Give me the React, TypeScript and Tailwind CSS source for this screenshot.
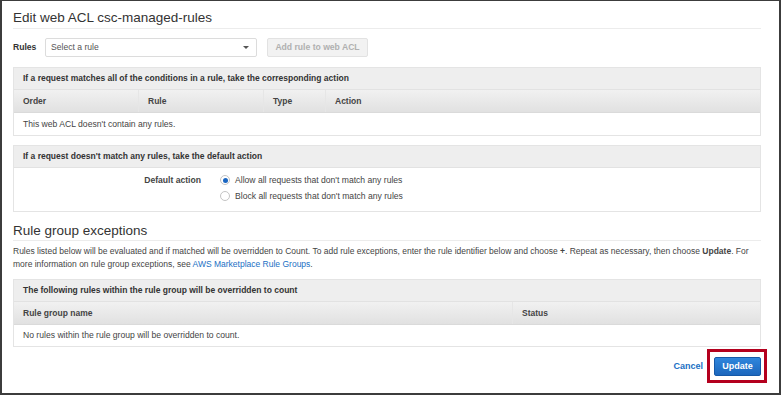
import React from "react";

const font = { fontFamily: '"Liberation Sans", Arial, sans-serif' };

type Col = { label: string; width?: string };

const PanelHeader: React.FC<{ title: string }> = ({ title }) => (
  <div className="h-[22px] flex items-center px-[9px] bg-[#eeeeee] border-b border-[#e2e2e2] text-[8.5px] font-bold text-[#333]">
    {title}
  </div>
);

const ColumnHeader: React.FC<{ cols: Col[] }> = ({ cols }) => (
  <div className="h-[23px] flex bg-gradient-to-b from-[#f1f1f1] to-[#e1e1e1] border-b border-[#dadada] text-[8.5px] font-bold text-[#444]">
    {cols.map((c, i) => (
      <div
        key={c.label}
        className={`${c.width ?? "flex-1"} flex items-center px-[9px] ${i > 0 ? "border-l border-[#e6e6e6]" : ""}`}
      >
        {c.label}
      </div>
    ))}
  </div>
);

const Radio: React.FC<{ checked?: boolean; label: string }> = ({ checked, label }) => (
  <div className="flex items-center h-[16px] gap-[5px]">
    <span className="w-[10px] h-[10px] rounded-full border border-[#c4c4c4] bg-white flex items-center justify-center">
      {checked && <span className="w-[5px] h-[5px] rounded-full bg-[#1a66c2]" />}
    </span>
    <span className="text-[8.6px] text-[#444]">{label}</span>
  </div>
);

export default function App() {
  return (
    <div style={font} className="w-[781px] h-[395px] border-2 border-t border-[#3c3c3c] bg-white pl-[11px] pr-[18px] flex flex-col">
      <div className="mt-[9px] h-[19px] leading-[16px] text-[13.5px] text-[#333] border-b border-[#ececec]">
        Edit web ACL csc-managed-rules
      </div>

      <div className="mt-[9px] h-[19px] flex items-center">
        <span className="w-[32px] text-[8.6px] font-bold text-[#333]">Rules</span>
        <div className="w-[212px] h-[19px] border border-[#dcdcdc] rounded-[2px] flex items-center justify-between px-[5px]">
          <span className="text-[8.6px] text-[#555]">Select a rule</span>
          <span className="w-0 h-0 border-l-[3px] border-r-[3px] border-t-[3px] border-l-transparent border-r-transparent border-t-[#555] mr-[2px]" />
        </div>
        <div className="ml-[10px] w-[101px] h-[19px] rounded-[2px] border border-[#e2e2e2] bg-[#f2f2f2] flex items-center justify-center text-[8.6px] font-bold text-[#b0b0b0]">
          Add rule to web ACL
        </div>
      </div>

      <div className="mt-[10px] border border-[#e4e4e4]">
        <PanelHeader title="If a request matches all of the conditions in a rule, take the corresponding action" />
        <ColumnHeader
          cols={[
            { label: "Order", width: "w-[124px]" },
            { label: "Rule", width: "w-[125px]" },
            { label: "Type", width: "w-[62px]" },
            { label: "Action" },
          ]}
        />
        <div className="h-[22px] flex items-center px-[9px] text-[8.6px] text-[#444]">
          This web ACL doesn't contain any rules.
        </div>
      </div>

      <div className="mt-[9px] border border-[#e4e4e4]">
        <PanelHeader title="If a request doesn't match any rules, take the default action" />
        <div className="h-[43px] flex pt-[4px]">
          <div className="w-[187px] h-[16px] flex items-center justify-end text-[8.6px] font-bold text-[#444]">
            Default action
          </div>
          <div className="ml-[19px] flex flex-col">
            <Radio checked label="Allow all requests that don't match any rules" />
            <Radio label="Block all requests that don't match any rules" />
          </div>
        </div>
      </div>

      <div className="mt-[11px] h-[18px] leading-[16px] text-[13.5px] text-[#333] border-b border-[#ececec]">
        Rule group exceptions
      </div>

      <div className="mt-[4px] text-[8.5px] leading-[13px] text-[#444] flex flex-col">
        <div className="h-[13px] whitespace-nowrap">
          Rules listed below will be evaluated and if matched will be overridden to Count. To add rule exceptions, enter the
          rule identifier below and choose <b>+</b>. Repeat as necessary, then choose <b>Update</b>. For
        </div>
        <div className="h-[13px] whitespace-nowrap">
          more information on rule group exceptions, see <span className="text-[#1a6fc4]">AWS Marketplace Rule Groups</span>.
        </div>
      </div>

      <div className="mt-[8px] border border-[#e4e4e4]">
        <PanelHeader title="The following rules within the rule group will be overridden to count" />
        <ColumnHeader
          cols={[
            { label: "Rule group name", width: "w-[498px]" },
            { label: "Status" },
          ]}
        />
        <div className="h-[21px] flex items-center px-[9px] text-[8.6px] text-[#444]">
          No rules within the rule group will be overridden to count.
        </div>
      </div>

      <div className="mt-[10px] flex items-center justify-end gap-[11px]">
        <span className="text-[9px] font-bold text-[#1a6fc4]">Cancel</span>
        <div className="relative">
          <div className="w-[47px] h-[19px] rounded-[2px] border border-[#1559a8] bg-gradient-to-b from-[#2f86dc] to-[#1c67bd] flex items-center justify-center text-[9px] font-bold text-white">
            Update
          </div>
          <div className="absolute -left-[7px] -right-[6px] -top-[8px] -bottom-[7px] border-[3px] border-[#b4001e]" />
        </div>
      </div>
    </div>
  );
}
